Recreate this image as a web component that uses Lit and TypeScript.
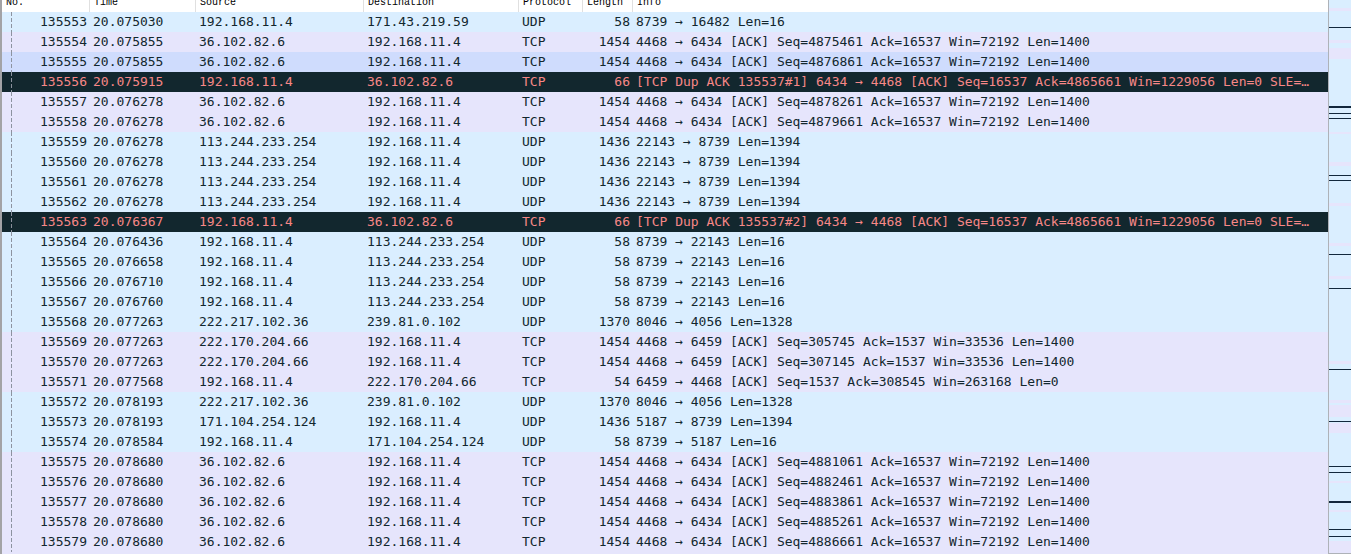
import { LitElement, html, css, svg } from "lit";
import { customElement } from "lit/decorators.js";

type Packet = [no: number, time: string, src: string, dst: string, proto: string, len: number, info: string];

const ME = "192.168.11.4";
const A = "36.102.82.6";
const B = "113.244.233.254";
const C = "222.217.102.36";
const D = "222.170.204.66";
const E = "171.104.254.124";
const M = "239.81.0.102";

const ack = (seq: number) => `4468 → 6434 [ACK] Seq=${seq} Ack=16537 Win=72192 Len=1400`;
const dup = (n: number) =>
  `[TCP Dup ACK 135537#${n}] 6434 → 4468 [ACK] Seq=16537 Ack=4865661 Win=1229056 Len=0 SLE=…`;

const packets: Packet[] = [
  [135553, "20.075030", ME, "171.43.219.59", "UDP", 58, "8739 → 16482 Len=16"],
  [135554, "20.075855", A, ME, "TCP", 1454, ack(4875461)],
  [135555, "20.075855", A, ME, "TCP", 1454, ack(4876861)],
  [135556, "20.075915", ME, A, "TCP", 66, dup(1)],
  [135557, "20.076278", A, ME, "TCP", 1454, ack(4878261)],
  [135558, "20.076278", A, ME, "TCP", 1454, ack(4879661)],
  [135559, "20.076278", B, ME, "UDP", 1436, "22143 → 8739 Len=1394"],
  [135560, "20.076278", B, ME, "UDP", 1436, "22143 → 8739 Len=1394"],
  [135561, "20.076278", B, ME, "UDP", 1436, "22143 → 8739 Len=1394"],
  [135562, "20.076278", B, ME, "UDP", 1436, "22143 → 8739 Len=1394"],
  [135563, "20.076367", ME, A, "TCP", 66, dup(2)],
  [135564, "20.076436", ME, B, "UDP", 58, "8739 → 22143 Len=16"],
  [135565, "20.076658", ME, B, "UDP", 58, "8739 → 22143 Len=16"],
  [135566, "20.076710", ME, B, "UDP", 58, "8739 → 22143 Len=16"],
  [135567, "20.076760", ME, B, "UDP", 58, "8739 → 22143 Len=16"],
  [135568, "20.077263", C, M, "UDP", 1370, "8046 → 4056 Len=1328"],
  [135569, "20.077263", D, ME, "TCP", 1454, "4468 → 6459 [ACK] Seq=305745 Ack=1537 Win=33536 Len=1400"],
  [135570, "20.077263", D, ME, "TCP", 1454, "4468 → 6459 [ACK] Seq=307145 Ack=1537 Win=33536 Len=1400"],
  [135571, "20.077568", ME, D, "TCP", 54, "6459 → 4468 [ACK] Seq=1537 Ack=308545 Win=263168 Len=0"],
  [135572, "20.078193", C, M, "UDP", 1370, "8046 → 4056 Len=1328"],
  [135573, "20.078193", E, ME, "UDP", 1436, "5187 → 8739 Len=1394"],
  [135574, "20.078584", ME, E, "UDP", 58, "8739 → 5187 Len=16"],
  [135575, "20.078680", A, ME, "TCP", 1454, ack(4881061)],
  [135576, "20.078680", A, ME, "TCP", 1454, ack(4882461)],
  [135577, "20.078680", A, ME, "TCP", 1454, ack(4883861)],
  [135578, "20.078680", A, ME, "TCP", 1454, ack(4885261)],
  [135579, "20.078680", A, ME, "TCP", 1454, ack(4886661)],
];

const SELECTED = 135555;

const rowClass = (p: Packet) =>
  p[0] === SELECTED ? "selected" : p[6].startsWith("[TCP Dup") ? "bad" : p[4].toLowerCase();

@customElement("packet-list")
export class PacketList extends LitElement {
  static styles = css`
    :host {
      display: block;
      min-width: 0;
      overflow: hidden;
      background: #e6e5fc;
    }
    table {
      width: 100%;
      table-layout: fixed;
      border-collapse: separate;
      border-spacing: 0;
      font: 13px/20px "DejaVu Sans Mono", monospace;
      color: #12272e;
    }
    .no { width: 88px; }
    .time { width: 106px; }
    .source { width: 168px; }
    .destination { width: 155px; }
    .protocol { width: 64px; }
    .length { width: 50px; }
    th,
    td {
      padding: 0 3px;
      text-align: left;
      white-space: nowrap;
    }
    th {
      height: 12px;
      padding: 0 4px;
      box-sizing: border-box;
      background: #fff;
      border-right: 1px solid #e0e0e0;
      color: #000;
      font: 10px/6px "Liberation Mono", monospace;
      vertical-align: top;
    }
    th:last-child { border-right-color: #fff; }
    td {
      height: 20px;
      overflow: hidden;
      text-overflow: ellipsis;
    }
    td:first-child,
    td:nth-child(6) { text-align: right; }
    td:first-child {
      background: repeating-linear-gradient(#8d93a0 0 4px, transparent 4px 6px) 9px 0 / 1px 100% no-repeat;
    }
    .udp { background: #daeeff; }
    .tcp { background: #e6e5fc; }
    .selected { background: #cfdcfd; }
    .bad { background: #12272e; color: #f78787; }
  `;

  render() {
    const cols = ["No.", "Time", "Source", "Destination", "Protocol", "Length", "Info"];
    return html`
      <table>
        <colgroup>
          ${cols.map((c) => html`<col class=${c.toLowerCase().replace(".", "")} />`)}
        </colgroup>
        <thead>
          <tr>${cols.map((c) => html`<th scope="col">${c}</th>`)}</tr>
        </thead>
        <tbody>
          ${packets.map((p) => html`<tr class=${rowClass(p)}>${p.map((v) => html`<td>${v}</td>`)}</tr>`)}
        </tbody>
      </table>
    `;
  }
}

const marks = [27, 106, 107, 113, 118, 175, 180, 254, 288, 369, 421, 466, 472, 501, 502, 529, 536];
const bands = [[8, 3], [40, 3], [48, 11], [132, 2], [162, 4], [203, 3], [243, 3], [276, 3], [361, 3], [400, 3], [405, 12], [423, 10], [481, 2], [510, 2], [541, 12]];

@customElement("packet-minimap")
export class PacketMinimap extends LitElement {
  static styles = css`
    :host {
      display: block;
      border: 0 solid #aeb2b8;
      border-width: 0 0 1px 1px;
      background: #daeeff;
      overflow: hidden;
    }
    svg { display: block; }
  `;

  render() {
    return html`
      <svg width="22" height="553" viewBox="0 0 22 553" shape-rendering="crispEdges" aria-hidden="true">
        ${bands.map(([y, h]) => svg`<rect y=${y} width="22" height=${h} fill="#e6e5fc" />`)}
        ${marks.map((y) => svg`<rect y=${y} width="22" height="1" fill="#12273c" />`)}
      </svg>
    `;
  }
}

@customElement("app-root")
export class AppRoot extends LitElement {
  static styles = css`
    :host {
      display: grid;
      grid-template-columns: minmax(0, 1fr) 23px;
      height: 100vh;
      overflow: hidden;
      border-left: 2px solid #a3a3a6;
      box-sizing: border-box;
    }
  `;

  render() {
    return html`<packet-list></packet-list><packet-minimap></packet-minimap>`;
  }
}
